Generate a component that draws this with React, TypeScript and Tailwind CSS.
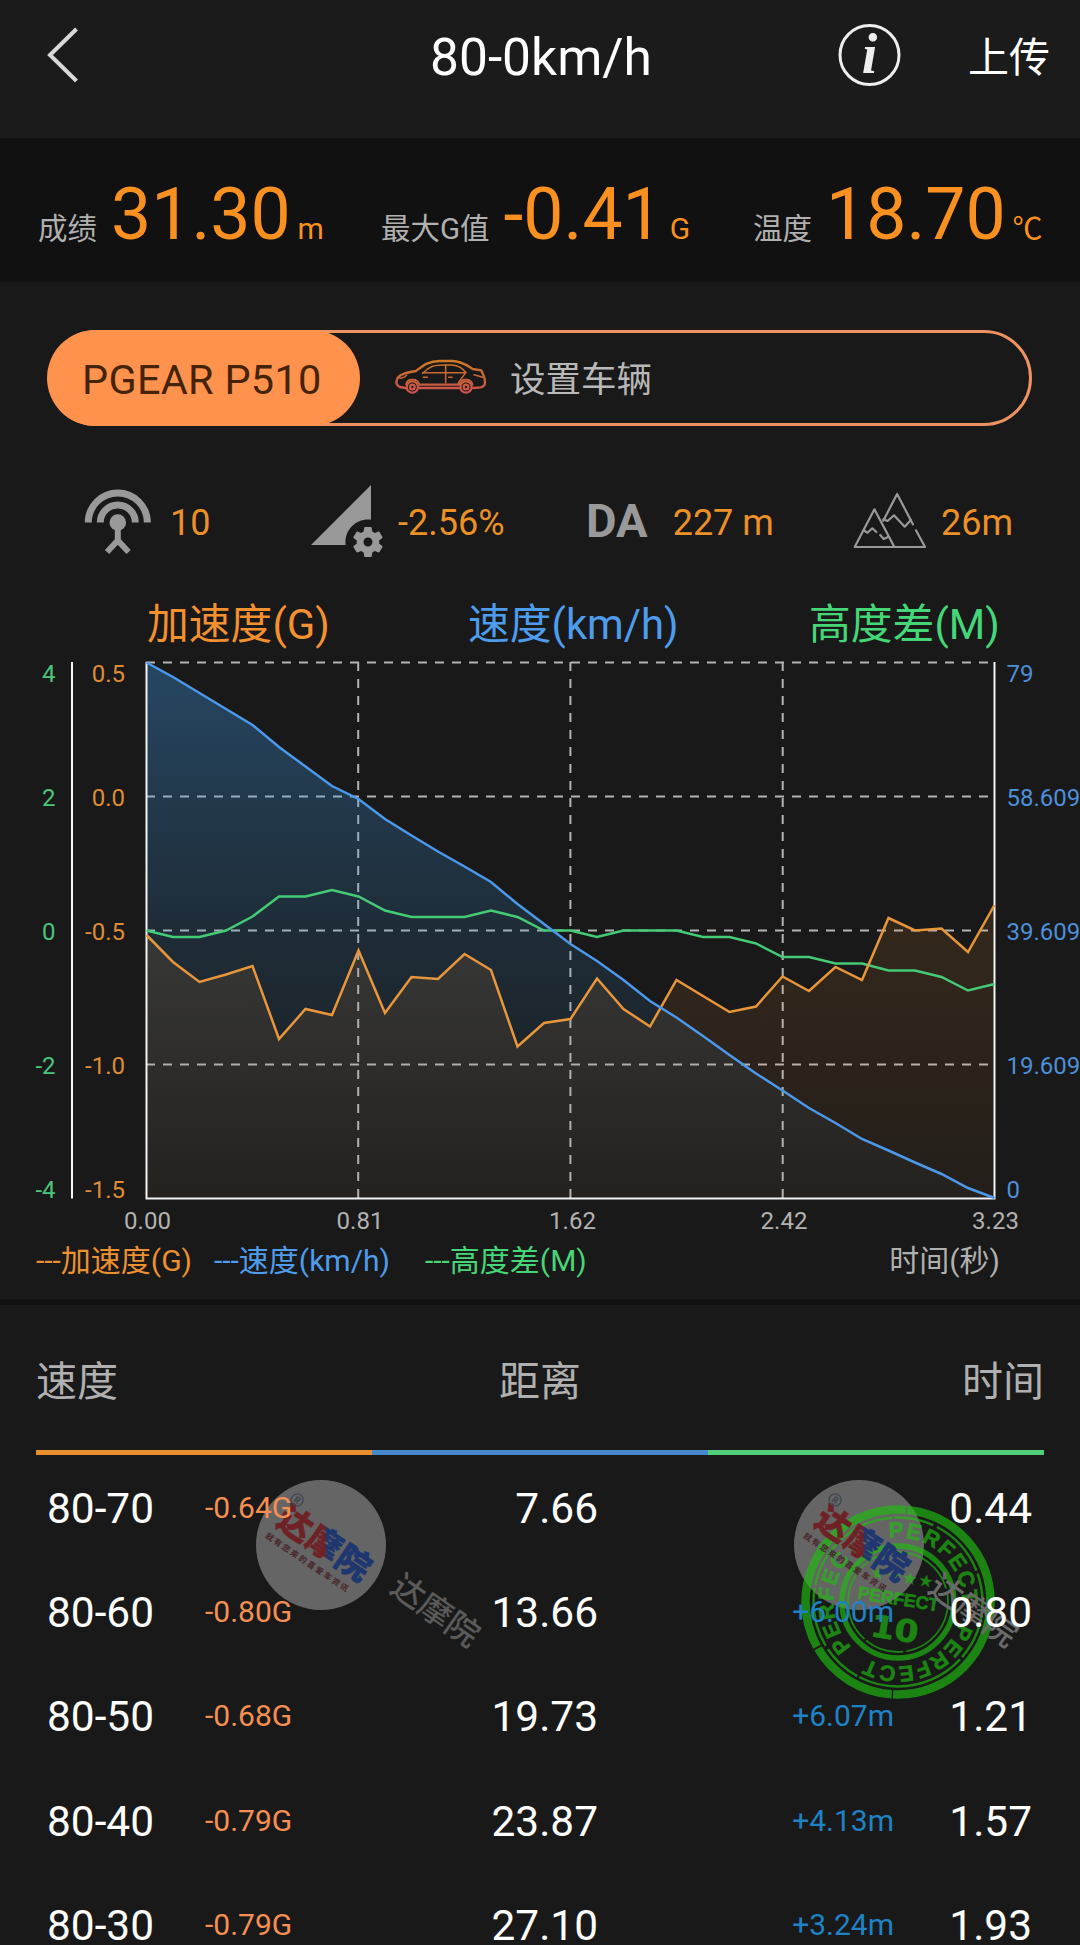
import React from "react";
import { MdPermDataSetting } from "react-icons/md";

const STEP = 26.5;
const LEFT = 146.5;
const BOTTOM = 1198;

const speed = [
  662.5, 677, 693, 709, 725, 747, 766.5, 786, 799, 819, 835.5, 851.5, 866.5, 882, 904, 924, 944, 961, 980, 1001, 1017.5,
  1036, 1055, 1073.5, 1090.5, 1108, 1123, 1139, 1150.5, 1162.5, 1174, 1188, 1198,
];
const height = [
  930.5, 937, 937, 930.5, 916.5, 896.5, 896.5, 890, 896.5, 910.5, 917, 917, 917, 910.5, 917, 930.5, 930.5, 937, 930.5,
  930.5, 930.5, 937, 937, 943.5, 957, 957, 963.5, 963.5, 970.5, 970.5, 977, 990.5, 984,
];
const accel = [
  935, 962, 982, 974.5, 966, 1039, 1009, 1015, 950.5, 1013, 977, 979, 954, 970, 1046.5, 1023, 1019, 978.5, 1009, 1026.5,
  980, 996, 1012, 1006.5, 976.5, 991, 967, 980, 918, 930.5, 928.5, 952, 905,
];

const toPoints = (ys: number[]) => ys.map((y, i) => `${LEFT + i * STEP},${y}`).join(" ");
const toArea = (ys: number[]) => `${LEFT},${BOTTOM} ${toPoints(ys)} ${LEFT + 32 * STEP},${BOTTOM}`;

const rowsY = [681.5, 806, 940, 1073.5, 1198];
const greenLabels = ["4", "2", "0", "-2", "-4"];
const orangeLabels = ["0.5", "0.0", "-0.5", "-1.0", "-1.5"];
const blueLabels = ["79", "58.609", "39.609", "19.609", "0"];
const timeLabels: [string, number][] = [
  ["0.00", 147.5],
  ["0.81", 360],
  ["1.62", 572.5],
  ["2.42", 784],
  ["3.23", 995.5],
];

const rows = [
  { range: "80-70", g: "-0.64G", dist: "7.66", diff: "", time: "0.44" },
  { range: "80-60", g: "-0.80G", dist: "13.66", diff: "+6.00m", time: "0.80" },
  { range: "80-50", g: "-0.68G", dist: "19.73", diff: "+6.07m", time: "1.21" },
  { range: "80-40", g: "-0.79G", dist: "23.87", diff: "+4.13m", time: "1.57" },
  { range: "80-30", g: "-0.79G", dist: "27.10", diff: "+3.24m", time: "1.93" },
];

function Chart() {
  return (
    <svg className="block h-[585px] w-[1080px]" viewBox="0 655 1080 585" fontSize="24">
      <defs>
        <linearGradient id="speedFill" gradientUnits="userSpaceOnUse" x1="0" y1="662" x2="0" y2="1198">
          <stop offset="0" stopColor="#3c98e4" stopOpacity="0.36" />
          <stop offset="0.500" stopColor="#3c98e4" stopOpacity="0.150" />
          <stop offset="1" stopColor="#3c98e4" stopOpacity="0.020" />
        </linearGradient>
        <linearGradient id="accelFill" gradientUnits="userSpaceOnUse" x1="0" y1="905" x2="0" y2="1198">
          <stop offset="0" stopColor="#ff9632" stopOpacity="0.12" />
          <stop offset="1" stopColor="#ff9632" stopOpacity="0.045" />
        </linearGradient>
      </defs>
      <g stroke="#b4b4b4" strokeWidth="2" strokeDasharray="9 8">
        {[662.5, 796.5, 930.5, 1064.5].map((y) => (
          <line key={y} x1="146" x2="994" y1={y} y2={y} />
        ))}
        {[358.2, 570.4, 782.7].map((x) => (
          <line key={x} x1={x} x2={x} y1="662" y2="1198" />
        ))}
      </g>
      <polygon points={toArea(speed)} fill="url(#speedFill)" />
      <polygon points={toArea(accel)} fill="url(#accelFill)" />
      <g stroke="#f4f4f4" strokeWidth="2" fill="none">
        <path d="M72 662V1198.500M146.500 662V1198.500H994.500V662" />
      </g>
      <g fill="none" strokeWidth="2.500">
        <polyline points={toPoints(height)} stroke="#43cb75" />
        <polyline points={toPoints(accel)} stroke="#e8963c" />
        <polyline points={toPoints(speed)} stroke="#4c98ea" />
      </g>
      {rowsY.map((y, i) => (
        <g key={y}>
          <text x="55.500" y={y} textAnchor="end" fill="#4bc57c">{greenLabels[i]}</text>
          <text x="125" y={y} textAnchor="end" fill="#de8c36">{orangeLabels[i]}</text>
          <text x="1006.500" y={y} fill="#4d8fd8">{blueLabels[i]}</text>
        </g>
      ))}
      {timeLabels.map(([t, x]) => (
        <text key={t} x={x} y="1229" textAnchor="middle" fill="#b2b2b2">{t}</text>
      ))}
    </svg>
  );
}

function CarIcon() {
  return (
    <svg className="h-[52px] w-[104px]" viewBox="0 0 312 156" fill="none" stroke="url(#carStroke)" strokeWidth="7" strokeLinejoin="round" strokeLinecap="round">
      <defs>
        <linearGradient id="carStroke" gradientUnits="userSpaceOnUse" x1="0" y1="25" x2="0" y2="125">
          <stop offset="0" stopColor="#cf7a26" />
          <stop offset="0.500" stopColor="#c96535" />
          <stop offset="1" stopColor="#cb4f52" />
        </linearGradient>
      </defs>
      <path d="M46 108L29 105C19 100 17 92 21 82C24 71 38 63 78 57C100 40 115 27 150 27H186C218 28 233 42 248 51L274 55C278 66 286 75 285 90C285 100 280 105 272 106L250 108M88 108H207M90 98H204" />
      <path d="M48 98C50 78 84 78 88 98M208 98C210 78 244 78 248 98" strokeWidth="5" />
      <circle cx="67" cy="105" r="17" />
      <circle cx="67" cy="105" r="7" />
      <circle cx="228" cy="105" r="17" />
      <circle cx="228" cy="105" r="7" />
      <path d="M98 64C118 43 132 39 160 39H185C208 40 217 50 228 62H98M167 40V92M226 63C220 74 208 84 204 96M100 76H112M28 78C38 80 44 76 50 70M252 68L278 76M176 76H186" strokeWidth="4.500" />
    </svg>
  );
}

function AntennaIcon() {
  return (
    <svg className="h-[68px] w-[68px]" viewBox="84 486 68 68" fill="none" stroke="#999" strokeWidth="7">
      <path d="M88.300 521.500A29.500 29.500 0 0 1 147.300 521.500M100.300 521.500A17.500 17.500 0 0 1 135.300 521.500" />
      <path d="M117.800 520V539M107 551L117.800 539.500L128.600 551" strokeWidth="6" />
      <circle cx="117.800" cy="521.500" r="8.300" fill="#999" stroke="none" />
    </svg>
  );
}

function MountainIcon() {
  return (
    <svg className="h-[62px] w-[80px]" viewBox="0 0 80 62" fill="none" stroke="#999" strokeWidth="2.200" strokeLinejoin="round" strokeLinecap="round">
      <path d="M33.300 30.700L47.100 4L62.900 34.300M66 40.300L75 57H4.700L24.400 19.300L44 56.300" />
      <path d="M13.700 40.300L17.500 42.700L22.300 38.300L26.400 42M30.200 45L33.700 49L38.500 46.700M33.300 29.300L37.500 31L44 25.300L54.700 36.700L60.900 30" />
    </svg>
  );
}

function Badge() {
  return <div className="h-[130px] w-[130px] rounded-full bg-[#656565]" />;
}

function Logo() {
  return (
    <svg className="h-[130px] w-[130px]" viewBox="-65 -65 130 130">
      <defs>
        <linearGradient id="logoMix" x1="0" y1="1" x2="1" y2="0">
          <stop offset="0.480" stopColor="#6f2226" />
          <stop offset="0.520" stopColor="#1f3770" />
        </linearGradient>
      </defs>
      <g transform="rotate(34)" fontWeight="900" textAnchor="middle" fontFamily="'Noto Sans CJK SC', sans-serif">
        <g fontSize="34" strokeWidth="0.600">
          <text x="-33" y="9" fill="#6f2226" stroke="#6f2226">达</text>
          <text x="2" y="9" fill="url(#logoMix)" stroke="url(#logoMix)">摩</text>
          <text x="37" y="9" fill="#1f3770" stroke="#1f3770">院</text>
        </g>
        <text x="-2" y="25" fontSize="8" fill="#4a2c30" textLength="98">就有您来的喜爱车资讯</text>
        <g transform="translate(-45 -24)">
          <circle r="6" fill="none" stroke="#3f4650" strokeWidth="1.300" />
          <text y="3.200" fontSize="9" fontWeight="700" fill="#3f4650">R</text>
        </g>
      </g>
    </svg>
  );
}

function Stamp() {
  return (
    <svg className="h-[200px] w-[200px] opacity-65" viewBox="-100 -100 200 200" fill="none" stroke="#1ebe0f">
      <defs>
        <path id="ringText" d="M0 -64.500A64.500 64.500 0 0 1 0 64.500A64.500 64.500 0 0 1 0 -64.500" />
      </defs>
      <circle r="92.500" strokeWidth="8.500" strokeDasharray="150 1.500 90 2 200 1" />
      <circle r="84.500" strokeWidth="2.500" strokeDasharray="60 3 110 2 40 4" />
      <circle r="56" strokeWidth="5.500" />
      <circle r="50" strokeWidth="1.800" strokeDasharray="70 3 40 2" />
      <g fill="#1ebe0f" stroke="#1ebe0f" strokeWidth="0.600" fontWeight="700">
        {["rotate(-8)", "rotate(109)", "rotate(226)"].map((t) => (
          <text key={t} transform={t} fontSize="22" fontFamily="'Liberation Sans', sans-serif">
            <textPath href="#ringText" textLength="112">PERFECT</textPath>
          </text>
        ))}
        <g transform="rotate(9)" textAnchor="middle">
          <text x="0" y="3" fontSize="18" textLength="82" fontFamily="'Liberation Sans', sans-serif">PERFECT</text>
          <text x="1" y="38" fontSize="31" textLength="48" lengthAdjust="spacingAndGlyphs" fontFamily="'DejaVu Sans', sans-serif">10</text>
          <text x="0" y="-20" fontSize="15" textLength="62" fontFamily="'DejaVu Sans', sans-serif">★★★★</text>
        </g>
      </g>
    </svg>
  );
}

function Stat({ label, value, unit }: { label: string; value: string; unit: string }) {
  return (
    <div className="flex items-baseline whitespace-nowrap">
      <span className="text-[29.5px] text-[#b0b0b0]">{label}</span>
      <span className="ml-[14px] text-[71.5px] leading-[84px]">{value}</span>
      <span className="ml-[7px] text-[30px]">{unit}</span>
    </div>
  );
}

export default function App() {
  return (
    <div className="relative h-[1945px] w-[1080px] overflow-hidden bg-[#191919] font-[Roboto,'Noto_Sans_CJK_SC',sans-serif]">
      <header className="grid h-[138px] grid-cols-[430px_1fr_180px_112px] bg-[#1b1b1b] text-white">
        <svg className="mt-[25px] ml-[44px] h-[60px] w-[40px]" viewBox="0 0 40 60" fill="none" stroke="#d8d8d8" strokeWidth="4">
          <path d="M32.500 4L6 30L32.500 56" />
        </svg>
        <h1 className="mt-[26px] text-[51.5px] leading-[64px] whitespace-nowrap">80-0km/h</h1>
        <svg className="mt-[22px] ml-[48px] h-[66px] w-[66px]" viewBox="0 0 66 66">
          <circle cx="33.500" cy="33" r="29.500" fill="none" stroke="#eee" strokeWidth="3" />
          <text x="33.500" y="51" textAnchor="middle" fontSize="56" fontWeight="700" fontStyle="italic" fill="#eee" fontFamily="'Liberation Serif', serif">i</text>
        </svg>
        <span className="mt-[26px] text-[41px] leading-[64px]">上传</span>
      </header>

      <section className="grid h-[144px] grid-cols-[343px_372px_1fr] bg-[#111111] pt-[35px] pl-[38px] text-[#fa9020]">
        <Stat label="成绩" value="31.30" unit="m" />
        <Stat label="最大G值" value="-0.41" unit="G" />
        <Stat label="温度" value="18.70" unit="℃" />
      </section>

      <section className="mt-[48px] ml-[48px] flex h-[96px] w-[984px] items-center rounded-full border-[3.5px] border-[#ee9163]">
        <div className="-ml-[4px] flex h-[96px] w-[313px] shrink-0 items-center rounded-full bg-[#ff924d] pt-[4px] pl-[35px] text-[41.4px] tracking-[0.3px] whitespace-nowrap text-[#452309]">PGEAR P510</div>
        <div className="ml-[30px] flex">
          <CarIcon />
        </div>
        <span className="ml-[16px] pt-[5px] text-[35.5px] text-[#b8b8b8]">设置车辆</span>
      </section>

      <section className="flex h-[154px] items-center pt-[36px] text-[36px] text-[#ec9028]">
        <div className="ml-[84px] flex w-[227px] items-center gap-[18px]">
          <AntennaIcon />
          <span className="pt-[4px]">10</span>
        </div>
        <div className="flex w-[275px] items-center gap-[15px]">
          <MdPermDataSetting className="size-[72px] shrink-0 text-[#999999]" />
          <span className="pt-[4px]">-2.56%</span>
        </div>
        <div className="flex w-[264px] items-center">
          <span className="text-[47px] font-bold text-[#999999]">DA</span>
          <span className="ml-[25px] pt-[4px]">227 m</span>
        </div>
        <div className="flex items-center gap-[11px]">
          <MountainIcon />
          <span className="pt-[4px]">26m</span>
        </div>
      </section>

      <section className="h-[719px]">
        <div className="grid h-[75px] grid-cols-[321px_341px_1fr] pl-[147px] text-[41.8px] leading-[90px] whitespace-nowrap">
          <span className="text-[#f39030]">加速度(G)</span>
          <span className="text-[#4e9cec]">速度(km/h)</span>
          <span className="text-[#45d678]">高度差(M)</span>
        </div>
        <Chart />
        <div className="flex pl-[36px] text-[30px] leading-[42px] whitespace-nowrap">
          <span className="w-[178px] text-[#ec9030]">---加速度(G)</span>
          <span className="w-[211px] text-[#4e9cec]">---速度(km/h)</span>
          <span className="text-[#45d678]">---高度差(M)</span>
          <span className="mr-[80px] ml-auto text-[#b0b0b0]">时间(秒)</span>
        </div>
      </section>

      <div className="h-[6px] bg-[#111111]" />

      <section>
        <div className="mx-[36px] flex h-[145px] items-center justify-between pt-[11px] text-[41px] text-[#b0b0b0]">
          <span>速度</span>
          <span>距离</span>
          <span>时间</span>
        </div>
        <div className="mx-[36px] grid h-[5px] grid-cols-3">
          <div className="bg-[#e98f30]" />
          <div className="bg-[#4688cc]" />
          <div className="bg-[#52cd78]" />
        </div>
        <div className="relative z-10">
          {rows.map((r) => (
            <div key={r.range} className="grid h-[104.2px] grid-cols-[205px_150px_243px_296px_138px] items-start pt-[24px] text-[42.4px] leading-[60px] whitespace-nowrap text-white">
              <span className="pl-[47px]">{r.range}</span>
              <span className="text-[30px] leading-[58px] text-[#f58e52]">{r.g}</span>
              <span className="text-right">{r.dist}</span>
              <span className="text-right text-[30px] leading-[58px] text-[#1f82c4]">{r.diff}</span>
              <span className="text-right">{r.time}</span>
            </div>
          ))}
        </div>
      </section>

      <div className="absolute top-[1480px] left-[256px]"><Badge /></div>
      <div className="absolute top-[1480px] left-[794px]"><Badge /></div>
      <div className="absolute top-[1502px] left-[797.5px]"><Stamp /></div>
      <div className="absolute top-[1480px] left-[256px]"><Logo /></div>
      <div className="absolute top-[1480px] left-[794px]"><Logo /></div>
      <div className="absolute top-[1586px] left-[383px] w-[104px] rotate-[35deg] text-center text-[33px] leading-[50px] font-medium whitespace-nowrap text-[#5a5a5a]">达摩院</div>
      <div className="absolute top-[1586px] left-[921px] w-[104px] rotate-[35deg] text-center text-[33px] leading-[50px] font-medium whitespace-nowrap text-[#6a6a6a]">达摩院</div>
    </div>
  );
}
